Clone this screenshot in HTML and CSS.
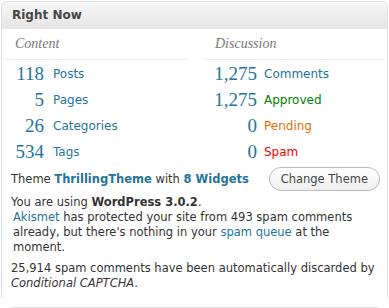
FILE: index.html
```html
<!DOCTYPE html>
<html lang="en">
  <head>
    <meta charset="UTF-8" />
    <meta name="viewport" content="width=device-width, initial-scale=1.0" />
    <title>Right Now</title>
    <link rel="stylesheet" href="styles.css">
  </head>
  <body>
    <div class="postbox">
      <h3 class="hndle">Right Now</h3>
      <div class="inside">
        <div class="columns">
          <div class="table table-content">
            <p class="sub">Content</p>
            <div class="rows">
              <a class="num" href="#">118</a><a class="label" href="#">Posts</a>
              <a class="num" href="#">5</a><a class="label" href="#">Pages</a>
              <a class="num" href="#">26</a><a class="label" href="#">Categories</a>
              <a class="num" href="#">534</a><a class="label" href="#">Tags</a>
            </div>
          </div>
          <div class="table table-discussion">
            <p class="sub">Discussion</p>
            <div class="rows">
              <a class="num" href="#">1,275</a><a class="label" href="#">Comments</a>
              <a class="num" href="#">1,275</a><a class="label approved" href="#">Approved</a>
              <a class="num" href="#">0</a><a class="label waiting" href="#">Pending</a>
              <a class="num" href="#">0</a><a class="label spam" href="#">Spam</a>
            </div>
          </div>
        </div>

        <div class="versions">
          <p class="theme">
            <span>Theme <a class="b" href="#">ThrillingTheme</a> with <a class="b" href="#">8 Widgets</a></span>
            <a class="button" href="#">Change Theme</a>
          </p>
          <p>You are using <strong>WordPress 3.0.2</strong>.</p>
        </div>
        <p class="akismet"><a href="#">Akismet</a> has protected your site from 493 spam comments already, but there's nothing in your <a href="#">spam queue</a> at the moment.</p>
        <p class="captcha">25,914 spam comments have been automatically discarded by <em>Conditional CAPTCHA</em>.</p>
      </div>
    </div>
    <div class="next-box"></div>
  </body>
</html>
```

FILE: styles.css
```css
body {
  margin: 0;
  padding: 1px 0 0 1px;
  background: #fff;
  font-family: "DejaVu Sans", Verdana, sans-serif;
  font-size: 11.5px;
  color: #333;
}
a {
  color: #21759b;
  text-decoration: none;
}
p {
  margin: 0;
}
.postbox {
  width: 385px;
  border: 1px solid #dfdfdf;
  border-bottom: none;
  border-radius: 6px 6px 0 0;
  overflow: hidden;
}
.hndle {
  margin: 0;
  height: 27px;
  line-height: 27px;
  padding-left: 10px;
  font-size: 12px;
  font-weight: bold;
  color: #464646;
  background: linear-gradient(#f7f7f7, #e4e4e4);
}
.inside {
  padding-bottom: 7px;
}
.columns {
  display: grid;
  grid-template-columns: 185px 181px;
  column-gap: 15px;
  padding-left: 1px;
}
.sub {
  height: 30px;
  line-height: 30px;
  padding-left: 12px;
  font-family: "Liberation Serif", Georgia, serif;
  font-style: italic;
  font-size: 14px;
  color: #777;
  border-bottom: 1px solid #ececec;
}
.rows {
  display: grid;
  grid-template-columns: 41px 1fr;
  grid-auto-rows: 26px;
  padding-top: 1px;
  align-items: center;
}
.table-discussion .rows {
  grid-template-columns: 54px 1fr;
}
.num {
  text-align: right;
  font-family: "Liberation Serif", Georgia, serif;
  font-size: 19px;
}
.label {
  padding-left: 9px;
  font-size: 12px;
}
.table-discussion .label {
  padding-left: 7px;
}
.approved {
  color: #008000;
}
.waiting {
  color: #e66f00;
}
.spam {
  color: #e00;
}
.versions,
.akismet,
.captcha {
  padding: 0 12px 0 9px;
  line-height: 15px;
}
.theme {
  display: flex;
  justify-content: space-between;
  align-items: center;
  height: 26px;
  margin-top: 1px;
  margin-right: -5px;
}
.b {
  font-weight: bold;
}
.button {
  height: 22px;
  line-height: 22px;
  padding: 0 11px;
  border: 1px solid #bbb;
  border-radius: 12px;
  background: linear-gradient(#fff, #efefef);
  color: #464646;
  font-size: 11.5px;
}
.versions p:last-child {
  margin-top: 3px;
}
.akismet {
  padding-left: 11px;
}
.captcha {
  margin-top: 6px;
}
.next-box {
  margin: 9px 10px 0 10px;
  border-top: 1px solid #e3e3e3;
}
```
